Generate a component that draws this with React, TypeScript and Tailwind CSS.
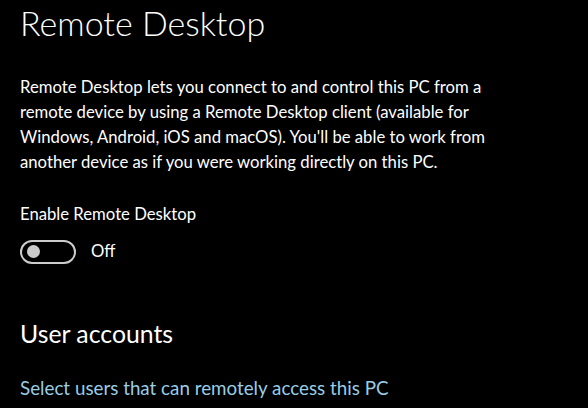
export default function App() {
  return (
    <div className="w-[588px] h-[408px] overflow-hidden bg-black text-white font-['Lato',sans-serif] pl-5">
      <h1 className="text-[34px] font-light leading-none pt-[6px]">Remote Desktop</h1>
      <p className="mt-[35px] w-[490px] text-[16.7px] leading-[25px]">
        Remote Desktop lets you connect to and control this PC from a remote device by using a Remote Desktop client
        (available for Windows, Android, iOS and macOS). You'll be able to work from another device as if you were
        working directly on this PC.
      </p>
      <div className="mt-[27px] text-[16.7px] leading-[25px]">Enable Remote Desktop</div>
      <div className="mt-[12px] flex items-center gap-[15px]">
        <div className="w-[56px] h-[24px] rounded-full border-2 border-[#cccccc] flex items-center pl-[5px]">
          <div className="w-[13px] h-[13px] rounded-full bg-[#cccccc]" />
        </div>
        <span className="text-[16.7px] leading-[25px]">Off</span>
      </div>
      <h2 className="mt-[58px] text-[24.8px] leading-none">User accounts</h2>
      <a className="block mt-[28px] text-[18.8px] leading-[25px] text-[#99cde4]">Select users that can remotely access this PC</a>
    </div>
  );
}
